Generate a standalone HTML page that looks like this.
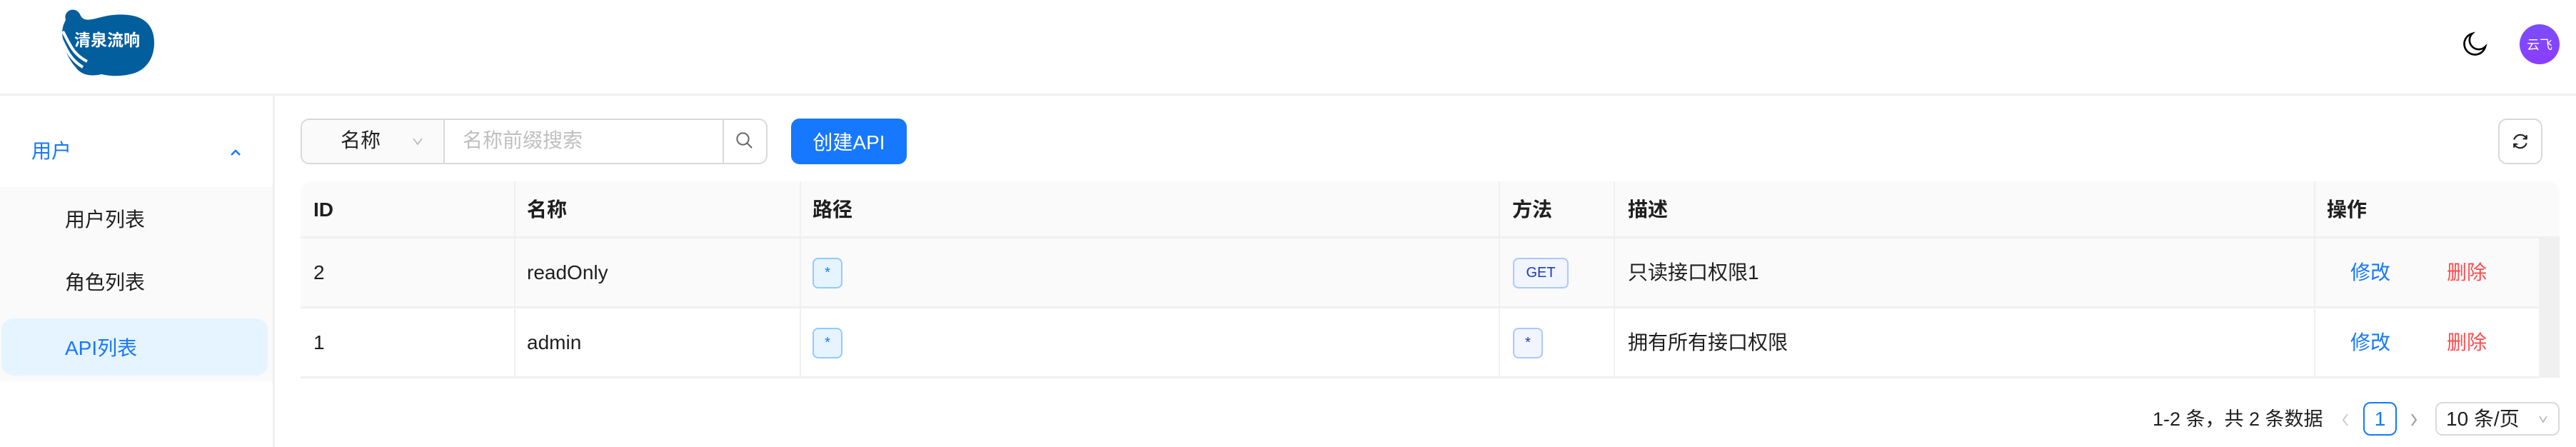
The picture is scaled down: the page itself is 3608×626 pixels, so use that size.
<!DOCTYPE html>
<html><head><meta charset="utf-8"><style>
*{box-sizing:border-box;margin:0;padding:0}
body{width:3608px;height:626px;background:#fff;font-family:"Liberation Sans","Noto Sans CJK SC",sans-serif;color:rgba(0,0,0,.88);position:relative;overflow:hidden;font-size:28px}
.a{position:absolute}
.hdr{left:0;top:0;width:3608px;height:134px;border-bottom:3px solid #f0f0f0}
.side{left:0;top:134px;width:385px;height:492px;border-right:3px solid #f0f0f0}
.sub{left:0;top:262px;width:382px;height:272px;background:#fafafa}
.sel{left:2px;top:446px;width:373px;height:80px;background:#e6f4ff;border-radius:16px}
.t{position:absolute;white-space:nowrap;line-height:1}
.tag{position:absolute;height:43px;border-radius:8px;font-size:20px;display:flex;align-items:center;justify-content:center}
.tb{background:#e6f4ff;border:2px solid #91caff;color:#1677ff}
.tg{background:#f0f5ff;border:2px solid #adc6ff;color:#1d39c4}
.vl{position:absolute;width:2px;background:#f0f0f0}
.hl{position:absolute;height:3px;background:#f0f0f0}
</style></head><body>
<div class="a hdr"></div>
<svg class="a" style="left:70px;top:8px" width="152" height="104" viewBox="0 0 152 104">
<path d="M22 20 C18 6 36 0 42 12 C46 22 54 20 64 18 C78 14 96 10 116 14 C136 18 146 32 146 52 C146 74 134 92 112 96 C94 100 82 98 72 96 C56 100 42 96 36 86 C28 78 20 62 18 46 C16 34 18 28 22 20 Z" fill="#035e9e"/>
<path d="M6 40 C16 60 20 80 40 94 M12 38 C22 58 26 74 46 86 M18 36 C28 54 32 68 52 78" stroke="#fff" stroke-width="4" fill="none"/>
<text x="34" y="56" font-family="Noto Sans CJK SC,sans-serif" font-weight="bold" font-size="23" fill="#fff">清泉流响</text>
</svg>
<svg class="a" style="left:3446px;top:42px" width="40" height="40" viewBox="0 0 24 24"><path d="M10 3 A9 9 0 1 0 21 14 A7 7 0 0 1 10 3 Z" fill="none" stroke="#000" stroke-width="1.6"/></svg>
<div class="a" style="left:3529px;top:34px;width:56px;height:56px;border-radius:50%;background:linear-gradient(#7c4dff,#8b3dff);color:#fff;font-size:18px;display:flex;align-items:center;justify-content:center">云飞</div>
<div class="a side"></div>
<div class="a sub"></div>
<div class="a sel"></div>
<div class="t" style="left:44px;top:198px;color:#1677ff">用户</div>
<svg class="a" style="left:320px;top:206px" width="20" height="16" viewBox="0 0 20 16"><path d="M4 11 L10 5 L16 11" stroke="#1677ff" stroke-width="2.5" fill="none"/></svg>
<div class="t" style="left:91px;top:294px">用户列表</div>
<div class="t" style="left:91px;top:382px">角色列表</div>
<div class="t" style="left:91px;top:474px;color:#1677ff">API列表</div>
<div class="a" style="left:421px;top:166px;width:654px;height:64px;border:2px solid #d9d9d9;border-radius:12px"></div>
<div class="a" style="left:423px;top:168px;width:200px;height:60px;background:#fafafa;border-radius:10px 0 0 10px;border-right:2px solid #d9d9d9"></div>
<div class="t" style="left:477px;top:183px">名称</div>
<svg class="a" style="left:575px;top:188px" width="20" height="20" viewBox="0 0 20 20"><path d="M4 6 L10 14 L16 6" stroke="#bbb" stroke-width="1.8" fill="none"/></svg>
<div class="t" style="left:648px;top:183px;color:#bfbfbf">名称前缀搜索</div>
<div class="a" style="left:1012px;top:168px;width:2px;height:60px;background:#d9d9d9"></div>
<svg class="a" style="left:1028px;top:182px" width="30" height="30" viewBox="0 0 24 24"><circle cx="10" cy="10" r="6.5" fill="none" stroke="#666" stroke-width="1.6"/><path d="M15 15 L20 20" stroke="#666" stroke-width="1.6"/></svg>
<div class="a" style="left:1108px;top:166px;width:162px;height:64px;background:#1677ff;border-radius:12px;color:#fff;display:flex;align-items:center;justify-content:center">创建API</div>
<div class="a" style="left:3499px;top:166px;width:62px;height:64px;border:2px solid #d9d9d9;border-radius:12px"></div>
<svg class="a" style="left:3515px;top:183px" width="30" height="30" viewBox="0 0 24 24"><path d="M19 9 A7.5 7.5 0 0 0 5 10 M5 15 A7.5 7.5 0 0 0 19 14" fill="none" stroke="#222" stroke-width="1.7"/><path d="M19 5 V9 H15 M5 19 V15 H9" fill="none" stroke="#222" stroke-width="1.7"/></svg>
<div class="a" style="left:421px;top:254px;width:3164px;height:79px;background:#fafafa;border-radius:16px 16px 0 0"></div>
<div class="a" style="left:421px;top:333px;width:3135px;height:97px;background:#fafafa"></div>
<div class="a" style="left:3556px;top:333px;width:29px;height:196px;background:#f0f0f0"></div>
<div class="hl" style="left:421px;top:331px;width:3164px"></div>
<div class="hl" style="left:421px;top:429px;width:3135px"></div>
<div class="hl" style="left:421px;top:527px;width:3135px"></div>
<div class="vl" style="left:720px;top:254px;height:274px"></div>
<div class="vl" style="left:1120px;top:254px;height:274px"></div>
<div class="vl" style="left:2099px;top:254px;height:274px"></div>
<div class="vl" style="left:2260px;top:254px;height:274px"></div>
<div class="vl" style="left:3241px;top:254px;height:274px"></div>
<div class="t" style="left:439px;top:280px;font-weight:bold">ID</div>
<div class="t" style="left:738px;top:280px;font-weight:bold">名称</div>
<div class="t" style="left:1138px;top:280px;font-weight:bold">路径</div>
<div class="t" style="left:2118px;top:280px;font-weight:bold">方法</div>
<div class="t" style="left:2280px;top:280px;font-weight:bold">描述</div>
<div class="t" style="left:3259px;top:280px;font-weight:bold">操作</div>
<div class="t" style="left:439px;top:368px">2</div>
<div class="t" style="left:738px;top:368px">readOnly</div>
<div class="tag tb" style="left:1138px;top:361px;width:42px">*</div>
<div class="tag tg" style="left:2119px;top:361px;width:78px">GET</div>
<div class="t" style="left:2280px;top:368px">只读接口权限1</div>
<div class="t" style="left:3292px;top:368px;color:#1677ff">修改</div>
<div class="t" style="left:3427px;top:368px;color:#ff4d4f">删除</div>
<div class="t" style="left:439px;top:466px">1</div>
<div class="t" style="left:738px;top:466px">admin</div>
<div class="tag tb" style="left:1138px;top:459px;width:42px">*</div>
<div class="tag tg" style="left:2119px;top:459px;width:42px">*</div>
<div class="t" style="left:2280px;top:466px">拥有所有接口权限</div>
<div class="t" style="left:3292px;top:466px;color:#1677ff">修改</div>
<div class="t" style="left:3427px;top:466px;color:#ff4d4f">删除</div>
<div class="t" style="left:3015px;top:574px;font-size:27px">1-2 条，共 2 条数据</div>
<svg class="a" style="left:3276px;top:576px" width="18" height="24" viewBox="0 0 18 24"><path d="M12 4 L6 12 L12 20" stroke="#ccc" stroke-width="2" fill="none"/></svg>
<div class="a" style="left:3310px;top:563px;width:47px;height:47px;border:2px solid #1677ff;border-radius:10px;color:#1677ff;display:flex;align-items:center;justify-content:center">1</div>
<svg class="a" style="left:3372px;top:576px" width="18" height="24" viewBox="0 0 18 24"><path d="M6 4 L12 12 L6 20" stroke="#999" stroke-width="2" fill="none"/></svg>
<div class="a" style="left:3411px;top:563px;width:174px;height:47px;border:2px solid #d9d9d9;border-radius:10px"></div>
<div class="t" style="left:3426px;top:573px">10 条/页</div>
<svg class="a" style="left:3553px;top:578px" width="18" height="18" viewBox="0 0 18 18"><path d="M4 5 L9 13 L14 5" stroke="#bbb" stroke-width="1.8" fill="none"/></svg>
</body></html>
